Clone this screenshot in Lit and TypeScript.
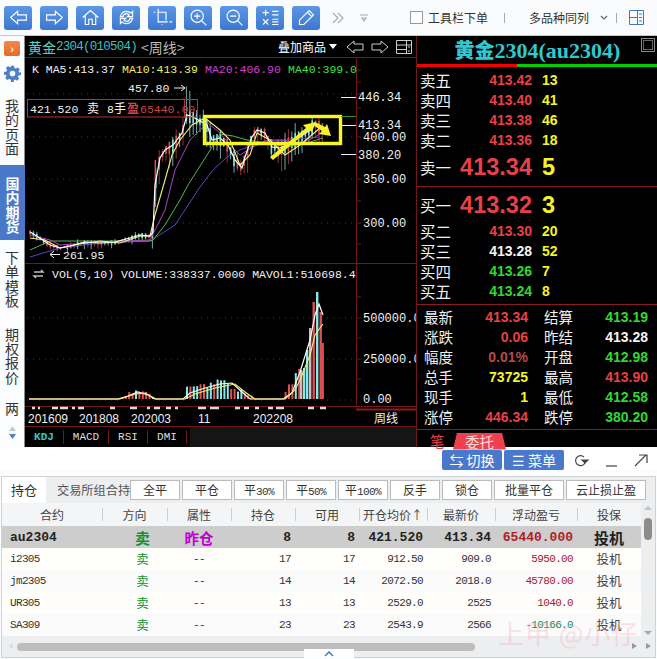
import { LitElement, html, css, svg } from "lit";
import { customElement } from "lit/decorators.js";

type P = [number, number];
const white: P[] = [[30,232],[40,238],[50,245],[60,248],[70,246],[85,242],[100,243],[115,242],[130,238],[140,235],[150,236],[153,232],[155,185],[160,158],[165,150],[173,145],[182,133],[187,115],[193,117],[207,125],[212,140],[220,138],[228,145],[235,160],[242,168],[245,157],[252,137],[257,130],[265,133],[272,147],[280,148],[290,143],[300,137],[310,130],[315,123],[320,128]];
const yellow: P[] = [[30,238],[45,240],[60,248],[80,244],[100,241],[120,243],[140,236],[150,236],[155,215],[165,180],[172,155],[180,140],[192,125],[205,118],[220,130],[230,140],[240,165],[250,155],[257,133],[270,140],[285,155],[300,145],[320,128]];
const magenta: P[] = [[30,235],[50,240],[60,245],[100,242],[150,240],[165,210],[175,170],[190,140],[200,130],[208,123],[220,133],[230,145],[240,155],[253,147],[267,140],[280,140],[300,143],[313,138],[322,133]];
const green: P[] = [[30,250],[50,241],[100,241],[150,241],[153,240],[165,225],[180,200],[188,185],[207,155],[220,134],[233,136],[247,140],[267,143],[287,147],[307,143],[323,138]];
const purple: P[] = [[30,257],[60,248],[100,243],[150,241],[175,225],[200,187],[213,170],[227,157],[240,150],[260,142],[283,140],[320,137]];
const volWhite: P[] = [[29,399],[118,399],[128,396],[138,392],[148,395],[155,399],[183,399],[190,393],[205,388],[220,384],[232,383],[242,392],[250,399],[283,399],[292,393],[300,372],[310,340],[315,315],[319,304],[323,315]];
const volYellow: P[] = [[29,399],[120,399],[135,394],[145,393],[156,399],[185,399],[195,394],[215,388],[235,384],[245,392],[255,399],[285,399],[295,390],[300,380],[310,355],[315,335],[320,328],[323,324]];

const pts = (a: P[]) => a.map((p) => p.join(",")).join(" ");
const at = (a: P[], x: number) => {
  for (let i = 1; i < a.length; i++) {
    if (x <= a[i][0]) {
      const t = (x - a[i - 1][0]) / (a[i][0] - a[i - 1][0]);
      return a[i - 1][1] + t * (a[i][1] - a[i - 1][1]);
    }
  }
  return a[a.length - 1][1];
};
let seed = 7;
const rnd = () => ((seed = (seed * 16807) % 2147483647) % 1000) / 1000;

const candles = () => {
  const out = [];
  for (let x = 30; x < 323; x += 3.4) {
    const c = at(white, x);
    const big = x > 150;
    const r = big ? 6 + rnd() * 12 : 1 + rnd() * 5;
    const up = rnd() > 0.5;
    const top = c - r * rnd() - (x > 180 && x < 190 ? 24 : 0);
    const bot = c + r * (0.6 + rnd());
    const b1 = c - r * 0.4;
    const b2 = c + r * 0.5;
    out.push(svg`<line class=${up ? "wr" : "wc"} x1=${x} x2=${x} y1=${top} y2=${bot}></line>
      <rect class=${up ? "br" : "bc"} x=${x - 0.8} y=${b1} width="1.6" height=${b2 - b1}></rect>`);
  }
  out.push(svg`<rect class="br" x="154.600" y="160" width="1.400" height="47"></rect>`);
  return out;
};

const volH = (x: number) => {
  if (x >= 118 && x < 156) return 8 * Math.sin(((x - 118) / 38) * Math.PI) * (0.6 + rnd() * 0.6);
  if (x >= 183 && x < 252) return (x < 220 ? 12 + (x - 183) / 4 : 22 - (x - 220) * 0.6) * (0.5 + rnd() * 0.6);
  if (x >= 284 && x < 300) return 6 + (x - 284) * 1.8 * (0.6 + rnd() * 0.6);
  return 0;
};
const volume = () => {
  const out = [];
  for (let x = 118; x < 300; x += 3.4) {
    const h = volH(x);
    if (h > 0)
      out.push(svg`<rect class=${rnd() > 0.5 ? "vr" : "vc"} x=${x} y=${399 - h} width="2" height=${h}></rect>`);
  }
  const last: [number, number, string][] = [[300, 370, "vg"], [303, 368, "vc"], [306, 350, "vc"], [309, 328, "vg"], [312.5, 302, "vr"], [316, 292, "vc"], [319.5, 312, "vr"], [321.5, 343, "vr"]];
  for (const [x, y, c] of last) out.push(svg`<rect class=${c} x=${x} y=${y} width="2.4" height=${399 - y}></rect>`);
  return out;
};

const ticks = [70, 82, 94, 108, 137, 158, 179, 201, 223, 244];
const vticks = [297, 318, 338, 359, 379];

const ICONS = {
  back: svg`<path d="M3 12 11 5v4h10v6H11v4z"/>`,
  fwd: svg`<path d="M21 12 13 5v4H3v6h10v4z"/>`,
  home: svg`<path d="M3 12 12 4l9 8M6 10v10h4v-6h4v6h4V10"/>`,
  refresh: svg`<path d="M5 11c1-4 4-6 7-6 2 0 4 1 5 2l2-2v6h-6l2-2c-1-1-2-1.500-3-1.500-2 0-3.500 1-4 3.500zM19 13c-1 4-4 6-7 6-2 0-4-1-5-2l-2 2v-6h6l-2 2c1 1 2 1.500 3 1.500 2 0 3.500-1 4-3.500z"/>`,
  crop: svg`<path d="M2 6h2M7 2v15h11M7 6h9v9M20 17h3M11 20h1"/>`,
  zin: svg`<circle cx="10.500" cy="10.500" r="7"/><path d="M7 10.500h7M10.500 7v7M15.500 15.500 21 21"/>`,
  zout: svg`<circle cx="10.500" cy="10.500" r="7"/><path d="M7 10.500h7M15.500 15.500 21 21"/>`,
  calc: svg`<path d="M3 6.500h7M6.500 3v7M14 5h7M14 9h7M3.500 14l6 6M9.500 14l-6 6M14 14h7M14 17h7M14 20h7"/>`,
  pen: svg`<path d="M4 20v-5L15 4l5 5L9 20zM13 6l5 5"/>`,
};

const Row = (l: string, p: string, q: string, pc: string, big = "") => html`
  <div class="dq ${big}"><span class="ql">${l}</span><span class="qp ${pc}">${p}</span><span class="qq">${q}</span></div>`;

@customElement("app-root")
export class AppRoot extends LitElement {
  static styles = css`
    :host { display: block; width: 657px; height: 659px; overflow: hidden; background: #fbfcfe; font-family: "Noto Sans CJK SC", sans-serif; position: relative; }
    .toolbar { height: 35px; border-bottom: 1px solid #c9c9c9; display: flex; align-items: center; padding-left: 4px; background: #f9fbfd; }
    .tb { width: 28px; height: 24px; border-radius: 3px; background: linear-gradient(#5b97e4, #3d78cf); display: flex; align-items: center; justify-content: center; margin-right: 8px; flex: none; }
    .tb svg { width: 21px; height: 21px; fill: none; stroke: #fff; stroke-width: 1.300; }
    .tools { display: flex; align-items: center; margin-left: 4px; color: #333; font-size: 12px; height: 100%; }
    .chev { width: 12px; height: 12px; fill: none; stroke: #aaa; stroke-width: 1.200; }
    .chk { width: 11px; height: 11px; border: 1px solid #999; margin-left: 40px; margin-right: 5px; background: #fff; }
    .sep { width: 1px; height: 10px; background: #aaa; }
    .main { height: 411px; display: flex; }
    .side { width: 25px; flex: none; display: flex; flex-direction: column; align-items: center; background: #fbfcfe; border-right: 1px solid #8a8a8a; box-sizing: border-box; font-size: 14px; line-height: 14.400px; color: #333; }
    .orange { width: 16px; height: 15px; margin-top: 5px; background: linear-gradient(#f08a4a, #e86a28); border-radius: 2px; color: #fff; font-size: 11px; line-height: 14px; text-align: center; font-weight: 700; }
    .gear { width: 17px; height: 17px; margin-top: 9px; fill: #4c80c8; }
    .vt { width: 14px; text-align: center; }
    .cur { align-self: stretch; width: 25px; background: #4a78c8; color: #fff; font-weight: 700; padding: 11px 0 6px; margin-top: 9.400px; display: flex; justify-content: center; height: 58px; box-sizing: content-box; }
    .chart { width: 391px; flex: none; background: #000; display: flex; flex-direction: column; }
    .chead { height: 22px; display: flex; align-items: center; padding-left: 3px; flex: none; border-bottom: 1px solid #701818; box-sizing: border-box; font-size: 14px; color: #bbb; }
    .ct1 { color: #4fd8c0; font-size: 14px; }
    .ct2 { color: #3fc0c0; font-family: "Liberation Mono", monospace; font-size: 12.500px; letter-spacing: -0.750px; margin-right: 4px; }
    .ct3 { color: #bbb; }
    .add { margin-left: auto; color: #fff; font-size: 12px; }
    .tri { width: 0; height: 0; border: 4px solid transparent; border-top: 5px solid #fff; border-bottom: 0; margin: 0 9px 0 3px; }
    .hic { width: 18px; height: 14px; fill: none; stroke: #ccc; stroke-width: 1; margin-right: 7px; }
    .plot { display: block; flex: none; }
    .plot text { font-family: "Liberation Mono", monospace; font-size: 11.500px; fill: #f0f0f0; white-space: pre; }
    .plot .cj { font-family: "Noto Sans CJK SC", sans-serif; font-size: 12px; }
    .plot .sa { font-family: "Liberation Sans", sans-serif; }
    .plot .yl { fill: #f4f060; } .plot .mg { fill: #d040d0; } .plot .gn { fill: #40e040; } .plot .rd { fill: #c84848; }
    .plot .axis { font-size: 12px; }
    .plot .bd { font-weight: 700; }
    .fr { stroke: #701818; stroke-width: 1; fill: none; }
    .bx { stroke: #b83030; stroke-width: 1; fill: none; }
    .bxf { fill: #000; }
    .dot { stroke: #7a2020; stroke-width: 1; stroke-dasharray: 1 5; }
    .tw { stroke: #f0f0f0; stroke-width: 1; fill: none; }
    .rep { fill: none; stroke: #bbb; stroke-width: 1.500; }
    .frag { stroke: #ddd; stroke-width: 2.500; fill: none; }
    .blk { stroke: #000; stroke-width: 1; }
    .fr2 { stroke: #8a1c1c; stroke-width: 2; }
    .gt { stroke: #309030; stroke-width: 1; }
    .wr { stroke: #b84040; stroke-width: 0.800; } .wc { stroke: #8fd8d8; stroke-width: 0.800; }
    .br { fill: #e05050; } .bc { fill: #80e0e0; }
    .vr { fill: #e05050; } .vc { fill: #88e8e8; } .vg { fill: #d8b8b8; }
    .ml { fill: none; stroke-width: 1; }
    .lw { stroke: #fff; stroke-width: 1.200; } .ly { stroke: #f8f070; stroke-width: 1.100; } .lm { stroke: #b040c0; } .lg { stroke: #50b850; } .lp { stroke: #5848c0; }
    .ybox { fill: none; stroke: #f8f820; stroke-width: 3.400; }
    .yarrow { fill: #f8f028; }
    .ctabs { height: 20px; display: flex; background: linear-gradient(90deg, #000 0 165px, #151515 165px); font-family: "Liberation Mono", monospace; font-size: 11px; color: #ddd; flex: none; align-items: center; }
    .ctab { border-right: 1px solid #701818; height: 14px; line-height: 14px; text-align: center; box-sizing: border-box; }
    .on { color: #30c8c8; font-weight: 700; }
    .w39 { width: 39px; } .w45 { width: 45px; }
    .quote { width: 241px; flex: none; background: #000; border-left: 1px solid #701818; box-sizing: border-box; color: #f0f0f0; display: flex; flex-direction: column; position: relative; }
    .qt { height: 28px; text-align: center; font-family: "Liberation Serif", "Noto Sans CJK SC", serif; font-weight: 700; font-size: 22px; line-height: 28px; color: #30c8d0; white-space: nowrap; padding-left: 1px; }
    .qt b { font-family: "Noto Sans CJK SC", sans-serif; font-size: 20px; }
    .sq { position: absolute; right: 2px; top: 2px; width: 12px; height: 12px; border: 1px solid #888; box-shadow: inset 0 0 0 1px #000, inset 0 0 0 2px #666; }
    .bar { height: 3px; flex: none; background: linear-gradient(90deg, #f00000 0 100px, #00d000 100px); margin-bottom: 3px; }
    .dq { height: 20px; display: grid; grid-template-columns: 3px 32px 80px 10px 1fr; align-items: center; flex: none; }
    .dq .ql { grid-column: 2; font-size: 15.500px; line-height: 20px; white-space: nowrap; }
    .dq .qp { grid-column: 3; text-align: right; font: 700 14px "Liberation Sans", sans-serif; }
    .dq .qq { grid-column: 5; color: #f4f428; font: 700 14px "Liberation Sans", sans-serif; }
    .dq.sbig { height: 36px; padding-bottom: 2px; box-sizing: border-box; }
    .dq.bbig { height: 34px; padding-top: 2px; box-sizing: border-box; }
    .dq.sbig .qp, .dq.bbig .qp, .dq.sbig .qq, .dq.bbig .qq { font-size: 23.500px; }
    .r { color: #e84048; } .g { color: #30d830; } .w { color: #f4f4f4; } .y { color: #f4f428; } .dr { color: #b84a4a; }
    .line { height: 1px; background: #8a1c1c; flex: none; }
    .sp3 { height: 3px; flex: none; }
    .stats { display: grid; grid-template-columns: 111px 120px; grid-auto-rows: 20px; padding: 2px 0 2px 7px; flex: none; }
    .st { display: flex; justify-content: space-between; align-items: center; font-size: 14.500px; line-height: 20px; width: 104px; }
    .st span:last-child { font: 700 14px "Liberation Sans", sans-serif; }
    .st.b { padding-left: 9px; }
    .qtabs { flex: 1; display: flex; align-items: center; font-size: 14.500px; padding-left: 13px; }
    .qt1 { color: #e84048; width: 23px; }
    .qt2 { background: #f04050; color: #ffd8d8; height: 17px; line-height: 17px; width: 53px; text-align: center; clip-path: polygon(4px 0, 49px 0, 53px 100%, 0 100%); margin-top: 1px; }
    .bar2 { height: 23px; display: flex; align-items: flex-end; padding-left: 442px; box-sizing: border-box; gap: 2px; background: #fff; }
    .bb { width: 60px; height: 20px; background: #4a78cc; border-radius: 2px; color: #fff; font-size: 14px; line-height: 20px; text-align: center; white-space: nowrap; }
    .win { width: 18px; height: 16px; fill: none; stroke: #444; stroke-width: 1.200; margin: 0 0 2px 10px; }
    .win.first { margin-left: 6px; }
    .win .fl { fill: #444; }
    .panel { position: absolute; left: 1px; top: 476px; width: 655px; height: 182px; box-sizing: border-box; border: 1px solid #cfd2d5; background: #eceef0; }
    .ptabs { height: 26px; display: flex; align-items: center; font-size: 12.500px; color: #333; }
    .tab { width: 44px; height: 26px; line-height: 26px; text-align: center; background: #fff; margin-right: 11px; flex: none; font-size: 13px; }
    .tab2 { width: 73px; overflow: hidden; white-space: nowrap; flex: none; color: #555; font-size: 12.200px; }
    .btns { display: flex; gap: 2px; }
    .btn { height: 20px; width: 50px; box-sizing: border-box; border: 1px solid #bbb; background: #fff; line-height: 18px; text-align: center; font-size: 12px; white-space: nowrap; flex: none; }
    .btn i { font: normal 11px "Liberation Mono", monospace; letter-spacing: -0.600px; }
    .btn.w70 { width: 70px; } .btn.w80 { width: 80px; }
    .wrap { display: flex; height: 137px; }
    .tbl { width: 639px; flex: none; }
    .g9 { display: grid; grid-template-columns: 100px 65px 64px 64px 64px 68px 68px 82px 64px; align-items: center; }
    .th { height: 23px; background: #f4f5f7; font-size: 12px; color: #444; text-align: center; line-height: 23px; }
    .th span { position: relative; height: 23px; white-space: nowrap; }
    .th span + span::before { content: ""; position: absolute; left: 0; top: 5px; height: 13px; width: 1px; background: #ccd; }
    .tr { height: 22px; font: 11px "Liberation Mono", monospace; letter-spacing: -0.650px; color: #333; background: #fbfbfb; line-height: 22px; }
    .tr:nth-child(odd) { background: #fffefa; }
    .tr.first { background: #cdcdcd !important; font: 700 13px "Liberation Mono", monospace; letter-spacing: 0; color: #222; }
    .tr span { text-align: right; padding-right: 4px; white-space: nowrap; }
    .tr .c0 { text-align: left; padding-left: 8px; }
    .tr .dir { text-align: center; padding: 0 0 0 16px; color: #109030; font-family: "Noto Sans CJK SC", sans-serif; font-size: 12.500px; letter-spacing: 0; }
    .tr .at { text-align: center; padding: 0; }
    .tr .tz { text-align: center; padding: 0; font-family: "Noto Sans CJK SC", sans-serif; font-size: 12.500px; color: #444; letter-spacing: 0; }
    .first .dir { font-size: 15px !important; font-weight: 700; color: #109030; }
    .first .at { color: #c000d0; font-family: "Noto Sans CJK SC", sans-serif; font-size: 14.500px; }
    .first .tz { font-size: 15px !important; font-weight: 700; color: #222; }
    .pl { color: #a82030; } .first .pl { color: #b02028; }
    .mn { color: #108868; }
    .vs { width: 15px; flex: none; position: relative; }
    .thumb { position: absolute; left: 3px; top: 15px; width: 8px; height: 22px; border-radius: 4px; background: #8c8c8c; }
    .up, .dn { position: absolute; left: 3px; width: 0; height: 0; border: 4px solid transparent; }
    .up { top: 3px; border-bottom: 4px solid #c4c4c4; border-top: 0; }
    .dn { top: 128px; border-top: 4px solid #aaa; border-bottom: 0; }
    .hs { height: 18px; position: relative; }
    .hthumb { position: absolute; left: 15px; top: 3px; width: 458px; height: 8px; border-radius: 4px; background: #bdbdbd; }
    .notch { position: absolute; left: 302px; top: 9px; width: 50px; height: 9px; background: #fff; text-align: center; }
    .notch svg { width: 10px; height: 6px; fill: none; stroke: #3f7fc8; stroke-width: 1.500; display: block; margin: 2px auto 0; }
    .ar { position: absolute; top: 3px; width: 0; height: 0; border: 3.500px solid transparent; border-left: 5px solid #999; border-right: 0; }
    .ar.a1 { left: 630px; } .ar.a2 { left: 644px; }
    .al { position: absolute; left: 6px; top: 3px; width: 0; height: 0; border: 3.500px solid transparent; border-right: 5px solid #ddd; border-left: 0; }
    .wm { position: absolute; left: 498px; top: 615px; font-size: 26px; color: rgba(250, 170, 190, .36); white-space: nowrap; line-height: 36px; pointer-events: none; letter-spacing: 1px; }
    .m10 { margin-top: 10px; } .m16 { margin-top: 16px; } .m19 { margin-top: 19px; } .m17 { margin-top: 17px; height: 15px; }
    .s1 { margin: 0 24px 0 16px; } .s2 { margin: 0 12px 0 3px; }
    .c2 { margin-left: 14px; } .c3 { margin: 0 3px 0 9px; stroke: #666; }
    .lay { fill: none; stroke: #3f78c8; }
    .hic.pn { width: 16px; margin-right: 4px; }
    .gu { fill: #c8c8c8; } .gd { fill: #4c80c8; }
  `;

  render() {
    seed = 7;
    const tb = Object.values(ICONS);
    const rows = [
      ["i2305", "17", "17", "912.50", "909.0", "5950.00", "pl"],
      ["jm2305", "14", "14", "2072.50", "2018.0", "45780.00", "pl"],
      ["UR305", "13", "13", "2529.0", "2525", "1040.0", "pl"],
      ["SA309", "23", "23", "2543.9", "2566", "-10166.0", "mn"],
    ];
    return html`
      <div class="toolbar">
        ${tb.map((i) => html`<div class="tb"><svg viewBox="0 0 24 24">${i}</svg></div>`)}
        <div class="tools">
          <svg class="chev" viewBox="0 0 12 12"><path d="M1 1l5 5-5 5M6 1l5 5-5 5"/></svg>
          <svg class="chev c2" viewBox="0 0 12 12"><path d="M2 3h8M4 6h4l-2 3z"/></svg>
          <div class="chk"></div><span>工具栏下单</span>
          <div class="sep s1"></div><span>多品种同列</span>
          <svg class="chev c3" viewBox="0 0 12 12"><path d="M3 4l3 3 3-3"/></svg>
          <div class="sep s2"></div>
          <svg class="lay" width="15" height="15" viewBox="0 0 15 15"><path d="M.5.5h14v14H.5zM.5 7.500h8M8.500.5v14M10 4h3M10 7.500h3M10 11h3"/></svg>
        </div>
      </div>
      <div class="main">
        <div class="side">
          <div class="orange">›</div>
          <svg class="gear" viewBox="0 0 24 24"><path d="M10 1h4l.7 3.200 2 .9 2.800-1.700 2.800 2.800-1.700 2.800.9 2L24 10v4l-3.500.7-.9 2 1.700 2.800-2.800 2.800-2.800-1.700-2 .9L14 24h-4l-.7-3.500-2-.9-2.800 1.700-2.800-2.800 1.700-2.800-.9-2L0 14v-4l3.500-.7.9-2L2.700 4.200l2.800-2.800 2.800 1.700 2-.9zM12 8a4 4 0 1 0 0 8 4 4 0 0 0 0-8z" fill-rule="evenodd"/></svg>
          <div class="vt m16">我的页面</div>
          <div class="cur"><div class="vt">国内期货</div></div>
          <div class="vt m10">下单模板</div>
          <div class="vt m19">期权报价</div>
          <div class="vt m17">两</div>
          <svg class="m10" width="9" height="16" viewBox="0 0 9 16"><path class="gu" d="M4.500 0 8 5H1z"/><path class="gd" d="M1 8h7l-3.500 5z"/></svg>
        </div>
        <div class="chart">
          <div class="chead">
            <span class="ct1">黄金</span><span class="ct2">2304(010504)</span><span class="ct3">&lt;周线&gt;</span>
            <span class="add">叠加商品</span><span class="tri"></span>
            <svg class="hic" viewBox="0 0 18 14"><path d="M1 7l7-6v3h9v6H8v3z"/></svg>
            <svg class="hic" viewBox="0 0 18 14"><path d="M17 7l-7-6v3H1v6h9v3z"/></svg>
            <svg class="hic pn" viewBox="0 0 16 14"><path d="M.5.5h15v13H.5zM.5 5h15M.5 9.500h10M10.500.5v13M12 7h2M12 11h2"/></svg>
          </div>
          <svg class="plot" width="391" height="369" viewBox="25 58 391 369">
            <line class="fr" x1="356.500" x2="356.500" y1="58" y2="406"></line>
            ${[94, 137, 179, 223].map((y) => svg`<line class="dot" x1="27" x2="356" y1=${y} y2=${y}></line>`)}
            ${[318, 359, 400].map((y) => svg`<line class="dot" x1="27" x2="356" y1=${y} y2=${y}></line>`)}
            ${ticks.map((y) => svg`<line class="fr" x1="357" x2="361" y1=${y} y2=${y}></line>`)}
            ${vticks.map((y) => svg`<line class="fr" x1="357" x2="361" y1=${y} y2=${y}></line>`)}
            <line class="fr" x1="25" x2="416" y1="263.500" y2="263.500"></line>
            <line class="fr" x1="25" x2="416" y1="406.500" y2="406.500"></line>
            <line class="fr2" x1="356" x2="416" y1="409.500" y2="409.500"></line>
            <line class="fr" x1="25" x2="416" y1="426.500" y2="426.500"></line>
            ${candles()}
            <polyline class="ml lp" points=${pts(purple)}></polyline>
            <polyline class="ml lg" points=${pts(green)}></polyline>
            <polyline class="ml lm" points=${pts(magenta)}></polyline>
            <polyline class="ml ly" points=${pts(yellow)}></polyline>
            <polyline class="ml lw" points=${pts(white)}></polyline>
            <rect class="ybox" x="204.500" y="116.500" width="136" height="27"></rect>
            <polygon class="yarrow" points="270,157 306,128 303,125 316,122 312,132 309,130 273,160"></polygon>
            <polygon class="yarrow" points="315,122 325,127 327,124 331,136 319,134 322,131 313,125"></polygon>
            <text x="32" y="73" xml:space="preserve">K MA5:413.37</text>
            <text class="yl" x="122" y="73">MA10:413.39</text>
            <text class="mg" x="205" y="73">MA20:406.90</text>
            <text class="gn" x="288" y="73">MA40:399.0</text>
            <text x="128" y="92">457.80</text>
            <path class="tw" d="M174 88h11M181 85l4 3-4 3"></path>
            <rect class="bx bxf" x="27.500" y="99.500" width="157" height="17.500"></rect>
            <rect class="bx" x="184.500" y="99.500" width="13" height="17.500"></rect>
            <text x="30" y="113">421.520</text>
            <text class="cj" x="87" y="113">卖</text>
            <text x="107" y="113">8</text><text class="cj" x="114" y="113">手</text>
            <text class="cj rd bd" x="127" y="113">盈</text><text class="rd" x="140" y="113">65440.00</text>
            <line class="tw" x1="341" x2="356" y1="97.500" y2="97.500"></line>
            <line class="tw" x1="341" x2="356" y1="125.500" y2="125.500"></line>
            <line class="tw" x1="341" x2="356" y1="154.500" y2="154.500"></line>
            <line class="gt" x1="341" x2="356" y1="116.500" y2="116.500"></line>
            <text class="axis" x="358" y="101">446.34</text>
            <text class="axis" x="358" y="129">413.34</text>
            <text class="axis" x="363" y="141">400.00</text>
            <text class="axis" x="358" y="159">380.20</text>
            <text class="axis" x="363" y="183">350.00</text>
            <text class="axis" x="363" y="227">300.00</text>
            <path class="tw" d="M50 254.500h10M54 251l-4 3.500 4 3.500"></path>
            <text x="63" y="259">261.95</text>
            <path class="rep" d="M34 272h9l-2-2M43 276h-9l2 2"></path>
            <text x="52" y="278">VOL(5,10) VOLUME:338337.0000 MAVOL1:510698.4</text>
            ${volume()}
            <polyline class="ml lw" points=${pts(volWhite)}></polyline>
            <polyline class="ml ly" points=${pts(volYellow)}></polyline>
            <text class="axis" x="363" y="322">500000.0</text>
            <text class="axis" x="363" y="363">250000.0</text>
            <text class="axis" x="363" y="403">0.00</text>
            <path class="frag" d="M32 408h3M38 408h2M52 408h6M60 408h8M72 408h3M78 408h6M110 408h5M130 408h7M147 408h3M154 408h6M166 408h5M175 408h3M198 408h8M210 408h9M235 408h5M244 408h5M255 408h4M268 408h5M276 408h8M308 408h6M320 408h6"></path>
            <text class="axis sa" x="28" y="423">201609</text>
            <text class="axis sa" x="79" y="423">201808</text>
            <text class="axis sa" x="131" y="423">202003</text>
            <text class="axis sa" x="198" y="423">11</text>
            <text class="axis sa" x="253" y="423">202208</text>
            <text class="cj" x="374" y="423">周线</text>
          </svg>
          <div class="ctabs">
            <div class="ctab on w39">KDJ</div>
            <div class="ctab w45">MACD</div>
            <div class="ctab w39">RSI</div>
            <div class="ctab w39">DMI</div>
          </div>
        </div>
        <div class="quote">
          <div class="qt"><b>黄金</b>2304(au2304)</div>
          <div class="sq"></div>
          <div class="bar"></div>
          ${Row("卖五", "413.42", "13", "r")}${Row("卖四", "413.40", "41", "r")}${Row("卖三", "413.38", "46", "r")}${Row("卖二", "413.36", "18", "r")}
          ${Row("卖一", "413.34", "5", "r", "sbig")}
          <div class="line"></div>
          ${Row("买一", "413.32", "3", "r", "bbig")}
          ${Row("买二", "413.30", "20", "r")}${Row("买三", "413.28", "52", "w")}${Row("买四", "413.26", "7", "g")}${Row("买五", "413.24", "8", "g")}
          <div class="sp3"></div>
          <div class="line"></div>
          <div class="stats">
            ${[
              ["最新", "413.34", "r", "结算", "413.19", "g"],
              ["涨跌", "0.06", "r", "昨结", "413.28", "w"],
              ["幅度", "0.01%", "dr", "开盘", "412.98", "g"],
              ["总手", "73725", "y", "最高", "413.90", "r"],
              ["现手", "1", "y", "最低", "412.58", "g"],
              ["涨停", "446.34", "r", "跌停", "380.20", "g"],
            ].map((s) => html`
              <div class="st a"><span>${s[0]}</span><span class=${s[2]}>${s[1]}</span></div>
              <div class="st b"><span>${s[3]}</span><span class=${s[5]}>${s[4]}</span></div>`)}
          </div>
          <div class="line"></div>
          <div class="qtabs"><span class="qt1">笔</span><span class="qt2">委托</span></div>
        </div>
      </div>
      <div class="bar2">
        <div class="bb">⇆ 切换</div>
        <div class="bb">☰ 菜单</div>
        <svg class="win first" viewBox="0 0 18 16"><path d="M13 11a5 5 0 1 1-1-6"/><path class="fl" d="M10 8h6l-3 3z"/></svg>
        <svg class="win" viewBox="0 0 18 16"><path d="M4 14h11"/></svg>
        <svg class="win" viewBox="0 0 18 16"><path d="M3 14 14 3M7 3h8v8"/></svg>
      </div>
      <div class="panel">
        <div class="ptabs">
          <div class="tab">持仓</div>
          <div class="tab2">交易所组合持仓</div>
          <div class="btns">
            <div class="btn">全平</div><div class="btn">平仓</div>
            <div class="btn">平<i>30%</i></div><div class="btn">平<i>50%</i></div><div class="btn">平<i>100%</i></div>
            <div class="btn">反手</div><div class="btn">锁仓</div>
            <div class="btn w70">批量平仓</div><div class="btn w80">云止损止盈</div>
          </div>
        </div>
        <div class="wrap">
          <div class="tbl">
            <div class="g9 th"><span>合约</span><span>方向</span><span>属性</span><span>持仓</span><span>可用</span><span>开仓均价↑</span><span>最新价</span><span>浮动盈亏</span><span>投保</span></div>
            <div class="g9 tr first"><span class="c0">au2304</span><span class="dir">卖</span><span class="at">昨仓</span><span>8</span><span>8</span><span>421.520</span><span>413.34</span><span class="pl">65440.000</span><span class="tz">投机</span></div>
            ${rows.map((r) => html`<div class="g9 tr"><span class="c0">${r[0]}</span><span class="dir">卖</span><span class="at">--</span><span>${r[1]}</span><span>${r[2]}</span><span>${r[3]}</span><span>${r[4]}</span><span class=${r[6]}>${r[5]}</span><span class="tz">投机</span></div>`)}
          </div>
          <div class="vs"><div class="up"></div><div class="thumb"></div><div class="dn"></div></div>
        </div>
        <div class="hs">
          <div class="al"></div><div class="hthumb"></div>
          <div class="ar a1"></div><div class="ar a2"></div>
          <div class="notch"><svg viewBox="0 0 10 6"><path d="M1 5l4-4 4 4"/></svg></div>
        </div>
      </div>
      <div class="wm">上甲 @小仔</div>
    `;
  }
}
